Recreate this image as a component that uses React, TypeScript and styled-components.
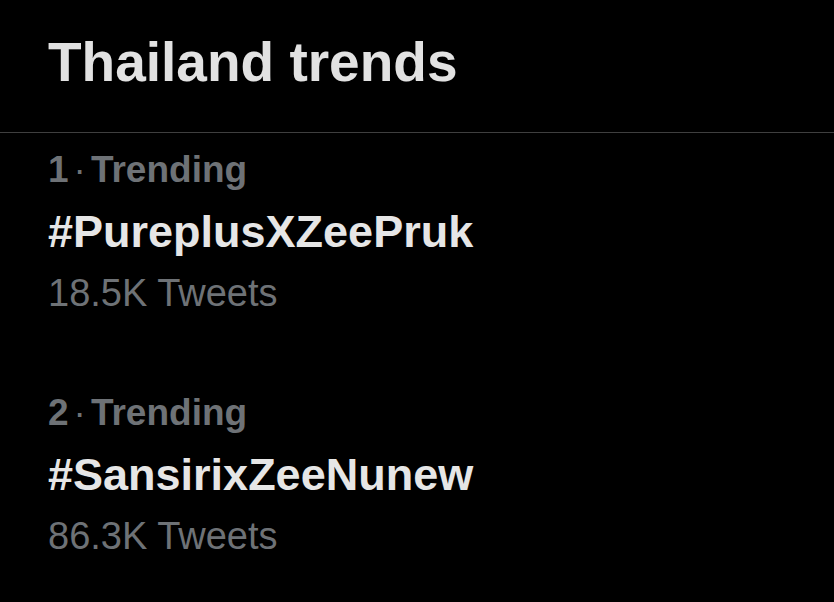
import styled, { createGlobalStyle } from "styled-components";

const GlobalStyle = createGlobalStyle`
  html, body {
    margin: 0;
    padding: 0;
    background: #000;
  }
  body {
    font-family: "Liberation Sans", Arial, sans-serif;
    -webkit-font-smoothing: antialiased;
  }
`;

interface Trend {
  rank: number;
  tag: string;
  count: string;
}

const trends: Trend[] = [
  { rank: 1, tag: "#PureplusXZeePruk", count: "18.5K Tweets" },
  { rank: 2, tag: "#SansirixZeeNunew", count: "86.3K Tweets" },
];

export default function App() {
  return (
    <>
      <GlobalStyle />
      <Page>
        <Header>
          <Title>Thailand trends</Title>
        </Header>
        <TrendList>
          {trends.map((t) => (
            <TrendItem key={t.tag}>
              <Meta>
                {t.rank}
                <Dot>·</Dot>
                Trending
              </Meta>
              <Hashtag>{t.tag}</Hashtag>
              <Count>{t.count}</Count>
            </TrendItem>
          ))}
        </TrendList>
      </Page>
    </>
  );
}

const Page = styled.div`
  width: 834px;
  height: 602px;
  background: #000;
  overflow: hidden;
`;

const Header = styled.div`
  padding: 30px 48px 38px;
  border-bottom: 1px solid #3f3f3f;
`;

const Title = styled.h1`
  margin: 0;
  font-size: 55px;
  line-height: 64px;
  font-weight: 700;
  color: #e2e2e2;
`;

const TrendList = styled.div`
  display: flex;
  flex-direction: column;
`;

const TrendItem = styled.div`
  display: flex;
  flex-direction: column;
  padding: 17px 48px 61px;
`;

const Meta = styled.div`
  font-size: 37px;
  line-height: 40px;
  font-weight: 700;
  color: #6e7276;
`;

const Dot = styled.span`
  margin: 0 5px;
  font-weight: 400;
`;

const Hashtag = styled.div`
  margin-top: 16px;
  font-size: 45px;
  line-height: 52px;
  font-weight: 700;
  color: #e6e6e6;
`;

const Count = styled.div`
  margin-top: 13px;
  font-size: 38px;
  line-height: 44px;
  font-weight: 400;
  color: #6e7276;
`;
